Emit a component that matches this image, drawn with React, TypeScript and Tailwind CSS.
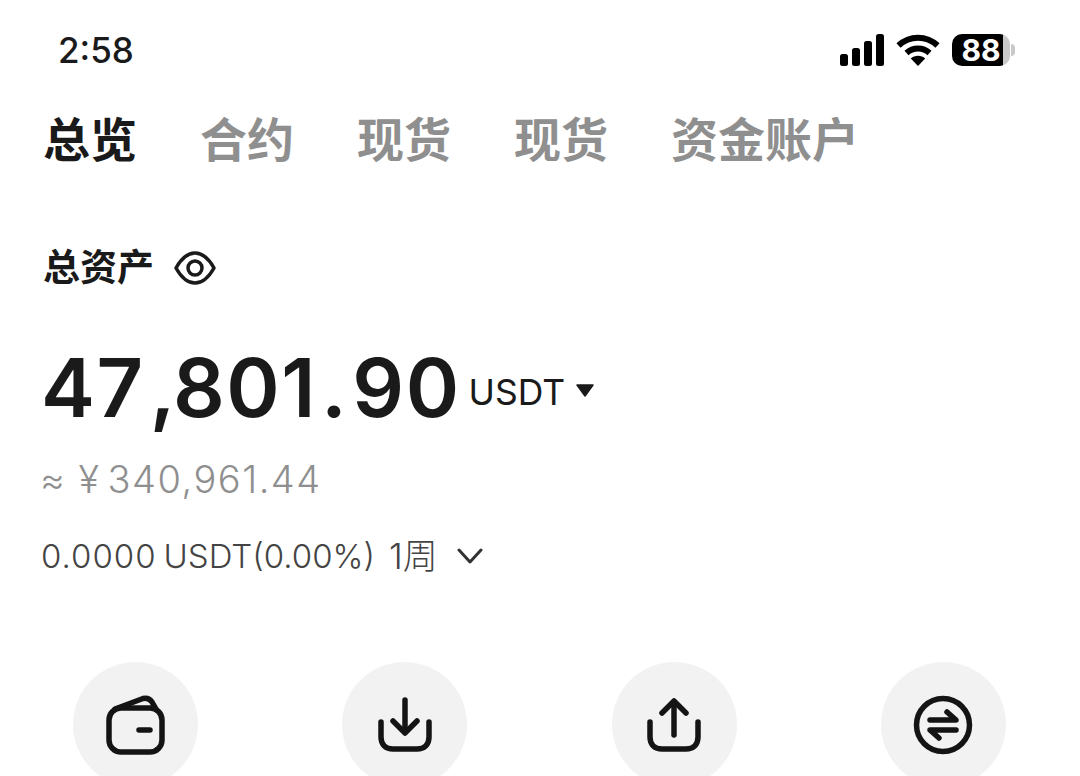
import { ReactNode } from "react";

const cjk = "font-['Inter','Noto_Sans_CJK_SC',sans-serif]";

const tabs = ["总览", "合约", "现货", "现货", "资金账户"];

function SignalIcon() {
  return (
    <svg width="44" height="32" viewBox="0 0 44 32" fill="#000">
      <rect x="0" y="20" width="8" height="12" rx="2.5" />
      <rect x="12" y="14" width="8" height="18" rx="2.5" />
      <rect x="24" y="7" width="8" height="25" rx="2.5" />
      <rect x="36" y="0" width="8" height="32" rx="2.5" />
    </svg>
  );
}

function WifiIcon() {
  return (
    <svg width="44" height="32" viewBox="0 0 44 32" fill="none" stroke="#000" strokeWidth="6">
      <path d="M2.5 11.5C13.5 1 30.500 1 41.500 11.500" />
      <path d="M10.500 19C17 13 27 13 33.500 19" />
      <path d="M22 32L14.800 24.500C18.500 20.800 25.500 20.800 29.200 24.500Z" fill="#000" stroke="none" />
    </svg>
  );
}

function BatteryIcon() {
  return (
    <div className="flex items-center">
      <div className="flex h-[32px] w-[58px] items-center justify-center rounded-[10px] bg-[linear-gradient(90deg,#000_88%,#c9c9c9_88%)]">
        <span className="font-['Inter',sans-serif] text-[30px] leading-none font-bold text-white">88</span>
      </div>
      <div className="ml-[1px] h-[12px] w-[4px] rounded-r-full bg-[#c9c9c9]" />
    </div>
  );
}

function EyeIcon() {
  return (
    <svg width="42" height="34" viewBox="0 0 42 34" fill="none" stroke="#1a1a1a" strokeWidth="3.500">
      <path d="M2 17C7 8 13 2 21 2C29 2 35 8 40 17C35 26 29 32 21 32C13 32 7 26 2 17Z" strokeLinejoin="round" />
      <circle cx="21" cy="17" r="7" />
    </svg>
  );
}

function CircleButton({ children }: { children: ReactNode }) {
  return <div className="flex h-[125px] w-[125px] items-center justify-center rounded-full bg-[#f2f2f2]">{children}</div>;
}

export default function App() {
  return (
    <div className={`h-[776px] w-[1080px] overflow-hidden bg-white text-[#1a1a1a] ${cjk}`}>
      {/* Barra de estado */}
      <div className="flex items-center justify-between pt-[29px] pr-[65px] pl-[58px]">
        <span className="text-[35px] leading-[42px] font-medium">2:58</span>
        <div className="flex items-center gap-[12px]">
          <SignalIcon />
          <WifiIcon />
          <BatteryIcon />
        </div>
      </div>

      {/* Pestañas */}
      <div className="mt-[39px] flex gap-[63px] pl-[43px]">
        {tabs.map((tab, i) => (
          <span key={i} className={`text-[47px] leading-[60px] font-bold ${i === 0 ? "text-[#1a1a1a]" : "text-[#8f8f8f]"}`}>
            {tab}
          </span>
        ))}
      </div>

      {/* Total */}
      <div className="mt-[75px] flex items-center gap-[20px] pl-[43px]">
        <span className="text-[37px] leading-[46px] font-bold">总资产</span>
        <EyeIcon />
      </div>

      <div className="mt-[47px] flex items-center pl-[41px]">
        <span className="text-[81px] leading-[100px] font-semibold tracking-[1.5px]">
          47<span className="ml-[5px] tracking-[-2.5px]">,</span>801<span className="mx-[4px]">.</span>90
        </span>
        <span className="mt-[10px] ml-[8px] text-[35.500px] leading-none font-normal">USDT</span>
        <svg className="mt-[4px] ml-[10px]" width="20" height="13" viewBox="0 0 20 13" fill="#1a1a1a">
          <path d="M2 1H18L10 12Z" stroke="#1a1a1a" strokeWidth="1.500" strokeLinejoin="round" />
        </svg>
      </div>

      <div className="mt-[19px] flex pl-[40px] text-[38px] leading-[44px] font-light tracking-[1.5px] text-[#8f8f8f]">
        <span>≈ ¥</span>
        <span className="ml-[7px]">340,961.44</span>
      </div>

      <div className="mt-[34px] flex items-center pl-[41px] text-[33px] leading-[42px] font-light text-[#444444]">
        <span className="tracking-[1px]">0.0000</span>
        <span className="ml-[7px]">USDT(0.00%)</span>
        <span className="ml-[14px] text-[35px]">1周</span>
        <svg className="ml-[19px]" width="26" height="16" viewBox="0 0 26 16" fill="none" stroke="#333333" strokeWidth="3" strokeLinecap="round" strokeLinejoin="round">
          <path d="M2 2L13 14L24 2" />
        </svg>
      </div>

      {/* Acciones */}
      <div className="mt-[85px] flex justify-between pr-[74px] pl-[73px]">
        <CircleButton>
          <svg width="60" height="60" viewBox="0 0 60 60" fill="none" stroke="#141414" strokeWidth="5.500" strokeLinecap="round" strokeLinejoin="round">
            <rect x="3" y="13" width="53" height="44" rx="12" />
            <path d="M9 14L37 3.500C41 2.500 44 4 46 7L50 14" />
            <path d="M33 35H44" />
          </svg>
        </CircleButton>
        <CircleButton>
          <svg width="56" height="56" viewBox="0 0 56 56" fill="none" stroke="#141414" strokeWidth="5.500" strokeLinecap="round" strokeLinejoin="round">
            <path d="M28 3V33" />
            <path d="M16 24L28 36L40 24" />
            <path d="M4 25V40C4 48 9 52 16 52H40C47 52 52 48 52 40V25" />
          </svg>
        </CircleButton>
        <CircleButton>
          <svg width="56" height="56" viewBox="0 0 56 56" fill="none" stroke="#141414" strokeWidth="5.500" strokeLinecap="round" strokeLinejoin="round">
            <path d="M28 38V5" />
            <path d="M16 16L28 4L40 16" />
            <path d="M4 25V40C4 48 9 52 16 52H40C47 52 52 48 52 40V25" />
          </svg>
        </CircleButton>
        <CircleButton>
          <svg width="60" height="60" viewBox="0 0 60 60" fill="none" stroke="#141414" strokeWidth="5.500" strokeLinecap="round" strokeLinejoin="round">
            <circle cx="30" cy="30" r="26.500" />
            <path d="M17 25H43L34 17" />
            <path d="M43 35H17L26 43" />
          </svg>
        </CircleButton>
      </div>
    </div>
  );
}
